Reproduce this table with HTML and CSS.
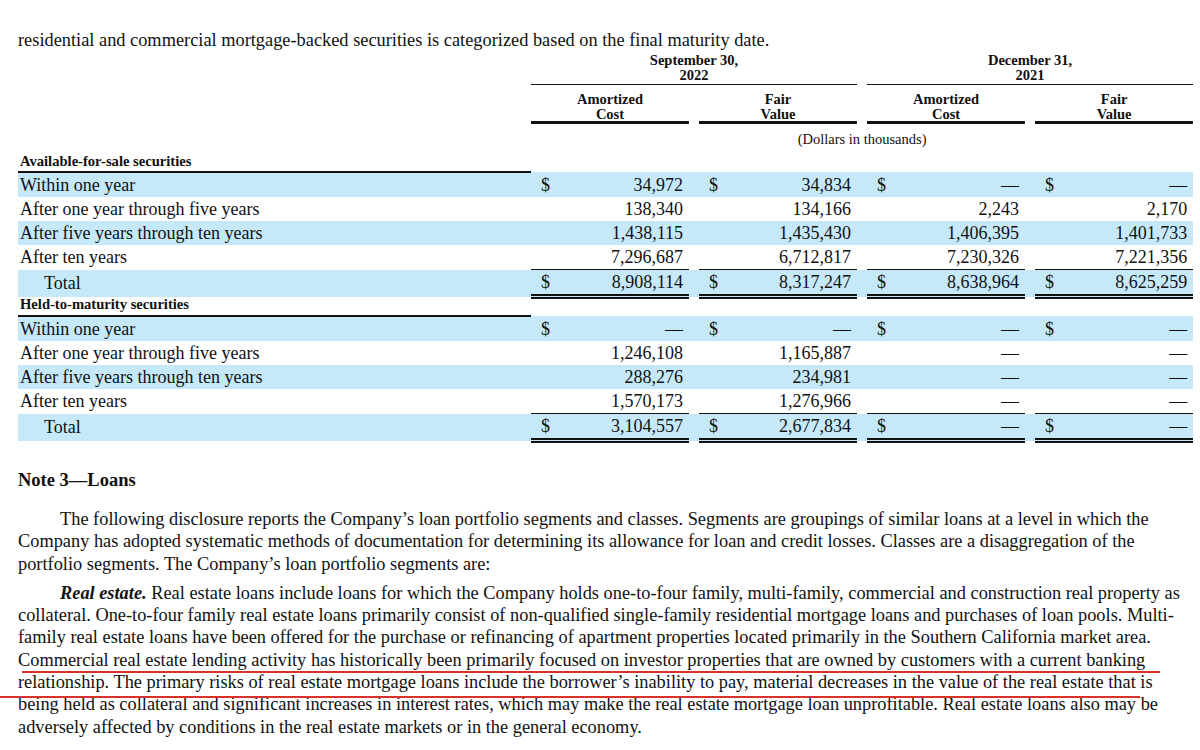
FILE: index.html
```html
<!DOCTYPE html>
<html lang="en">
<head>
  <meta charset="UTF-8" />
  <meta name="viewport" content="width=device-width, initial-scale=1.0" />
  <title>Note 3 — Loans</title>
  <link rel="stylesheet" href="styles.css">
</head>
<body>
  <div class="page">
    <p class="lead">residential and commercial mortgage-backed securities is categorized based on the final maturity date.</p>

    <table class="sec">
      <colgroup>
        <col class="c-label">
        <col class="c-cur"><col class="c-val"><col class="c-gap">
        <col class="c-cur"><col class="c-val"><col class="c-gap">
        <col class="c-cur"><col class="c-val"><col class="c-gap">
        <col class="c-cur"><col class="c-val">
      </colgroup>
      <thead>
        <tr class="dates">
          <th></th>
          <th colspan="5" class="date">September 30,<br>2022</th>
          <th></th>
          <th colspan="5" class="date">December 31,<br>2021</th>
        </tr>
        <tr class="heads">
          <th></th>
          <th colspan="2" class="head">Amortized<br>Cost</th>
          <th></th>
          <th colspan="2" class="head">Fair<br>Value</th>
          <th></th>
          <th colspan="2" class="head">Amortized<br>Cost</th>
          <th></th>
          <th colspan="2" class="head">Fair<br>Value</th>
        </tr>
        <tr class="units">
          <th></th>
          <th colspan="11">(Dollars in thousands)</th>
        </tr>
      </thead>
      <tbody>
        <tr class="group">
          <td class="group-title">Available-for-sale securities</td>
          <td colspan="11"></td>
        </tr>
        <tr class="shade">
          <td class="label">Within one year</td>
          <td class="cur">$</td><td class="val">34,972</td><td></td>
          <td class="cur">$</td><td class="val">34,834</td><td></td>
          <td class="cur">$</td><td class="val">—</td><td></td>
          <td class="cur">$</td><td class="val">—</td>
        </tr>
        <tr>
          <td class="label">After one year through five years</td>
          <td></td><td class="val">138,340</td><td></td>
          <td></td><td class="val">134,166</td><td></td>
          <td></td><td class="val">2,243</td><td></td>
          <td></td><td class="val">2,170</td>
        </tr>
        <tr class="shade">
          <td class="label">After five years through ten years</td>
          <td></td><td class="val">1,438,115</td><td></td>
          <td></td><td class="val">1,435,430</td><td></td>
          <td></td><td class="val">1,406,395</td><td></td>
          <td></td><td class="val">1,401,733</td>
        </tr>
        <tr>
          <td class="label">After ten years</td>
          <td></td><td class="val">7,296,687</td><td></td>
          <td></td><td class="val">6,712,817</td><td></td>
          <td></td><td class="val">7,230,326</td><td></td>
          <td></td><td class="val">7,221,356</td>
        </tr>
        <tr class="shade total">
          <td class="label total-label">Total</td>
          <td class="cur">$</td><td class="val">8,908,114</td><td></td>
          <td class="cur">$</td><td class="val">8,317,247</td><td></td>
          <td class="cur">$</td><td class="val">8,638,964</td><td></td>
          <td class="cur">$</td><td class="val">8,625,259</td>
        </tr>

        <tr class="group">
          <td class="group-title">Held-to-maturity securities</td>
          <td colspan="11"></td>
        </tr>
        <tr class="shade">
          <td class="label">Within one year</td>
          <td class="cur">$</td><td class="val">—</td><td></td>
          <td class="cur">$</td><td class="val">—</td><td></td>
          <td class="cur">$</td><td class="val">—</td><td></td>
          <td class="cur">$</td><td class="val">—</td>
        </tr>
        <tr>
          <td class="label">After one year through five years</td>
          <td></td><td class="val">1,246,108</td><td></td>
          <td></td><td class="val">1,165,887</td><td></td>
          <td></td><td class="val">—</td><td></td>
          <td></td><td class="val">—</td>
        </tr>
        <tr class="shade">
          <td class="label">After five years through ten years</td>
          <td></td><td class="val">288,276</td><td></td>
          <td></td><td class="val">234,981</td><td></td>
          <td></td><td class="val">—</td><td></td>
          <td></td><td class="val">—</td>
        </tr>
        <tr>
          <td class="label">After ten years</td>
          <td></td><td class="val">1,570,173</td><td></td>
          <td></td><td class="val">1,276,966</td><td></td>
          <td></td><td class="val">—</td><td></td>
          <td></td><td class="val">—</td>
        </tr>
        <tr class="shade total">
          <td class="label total-label">Total</td>
          <td class="cur">$</td><td class="val">3,104,557</td><td></td>
          <td class="cur">$</td><td class="val">2,677,834</td><td></td>
          <td class="cur">$</td><td class="val">—</td><td></td>
          <td class="cur">$</td><td class="val">—</td>
        </tr>
      </tbody>
    </table>

    <h3 class="note-title">Note 3—Loans</h3>

    <p class="para">The following disclosure reports the Company’s loan portfolio segments and classes. Segments are groupings of similar loans at a level in which the<br>
    Company has adopted systematic methods of documentation for determining its allowance for loan and credit losses. Classes are a disaggregation of the<br>
    portfolio segments. The Company’s loan portfolio segments are:</p>

    <p class="para"><b><i>Real estate.</i></b> Real estate loans include loans for which the Company holds one-to-four family, multi-family, commercial and construction real property as<br>
    collateral. One-to-four family real estate loans primarily consist of non-qualified single-family residential mortgage loans and purchases of loan pools. Multi-<br>
    family real estate loans have been offered for the purchase or refinancing of apartment properties located primarily in the Southern California market area.<br>
    Commercial real estate lending activity has historically been primarily focused on investor properties that are owned by customers with a current banking<br>
    relationship. The primary risks of real estate mortgage loans include the borrower’s inability to pay, material decreases in the value of the real estate that is<br>
    being held as collateral and significant increases in interest rates, which may make the real estate mortgage loan unprofitable. Real estate loans also may be<br>
    adversely affected by conditions in the real estate markets or in the general economy.</p>

    <!-- hand-drawn red underlines on the screenshot -->
    <div class="mark mark-one"></div>
    <div class="mark mark-two"></div>
  </div>
</body>
</html>
```

FILE: styles.css
```css
body {
  margin: 0;
  background: #fff;
  color: #111;
  font-family: "Liberation Serif", "Times New Roman", serif;
}
.page {
  position: relative;
  padding: 29px 0 0 18px;
  width: 1182px;
  height: 721px;
  overflow: hidden;
}
.lead {
  margin: 0;
  font-size: 18.35px;
  line-height: 22px;
}

/* securities table */
.sec {
  width: 1175px;
  table-layout: fixed;
  border-collapse: collapse;
  margin-top: 2px;
}
.c-label { width: 513px; }
.c-cur { width: 24px; }
.c-val { width: 134px; }
.c-gap { width: 10px; }

.sec th {
  padding: 0;
  font-weight: bold;
  font-size: 14.5px;
  line-height: 14.5px;
  text-align: center;
}
.dates th {
  height: 31px;
  vertical-align: top;
}
.date {
  border-bottom: 1.5px solid #111;
}
.heads th {
  padding-top: 7px;
  height: 29px;
  vertical-align: top;
}
.head {
  border-bottom: 3px solid #111;
}
.units th {
  font-weight: normal;
  font-size: 14.5px;
  height: 30px;
  vertical-align: middle;
}

.sec td {
  padding: 0;
  font-size: 18px;
  line-height: 24px;
  height: 24px;
  white-space: nowrap;
}
.shade {
  background: #c6e9f9;
}
.group td {
  height: 17px;
  line-height: 15px;
  vertical-align: top;
}
.sec .group-title {
  font-size: 14.6px;
  font-weight: bold;
  padding-left: 2px;
  border-bottom: 2.5px solid #111;
}
.sec .label {
  padding-left: 2px;
}
.sec .total-label {
  padding-left: 26px;
}
.sec .cur {
  padding-left: 10px;
}
.sec .val {
  text-align: right;
  padding-right: 6px;
}
.total .cur,
.total .val {
  border-top: 1.5px solid #111;
  border-bottom: 5px double #111;
}
.total td {
  height: 24px;
}

/* note text */
.note-title {
  margin: 26px 0 0 0;
  font-size: 18.5px;
  line-height: 22px;
}
.para {
  margin: 17px 0 0 0;
  font-size: 18.35px;
  line-height: 22.3px;
  text-indent: 42px;
}
.para + .para {
  margin-top: 7px;
}

.mark {
  position: absolute;
  height: 2px;
  background: #d8332a;
}
.mark-one {
  left: 22px;
  top: 671px;
  width: 1138px;
}
.mark-two {
  left: 0;
  top: 696px;
  width: 1140px;
}
```
